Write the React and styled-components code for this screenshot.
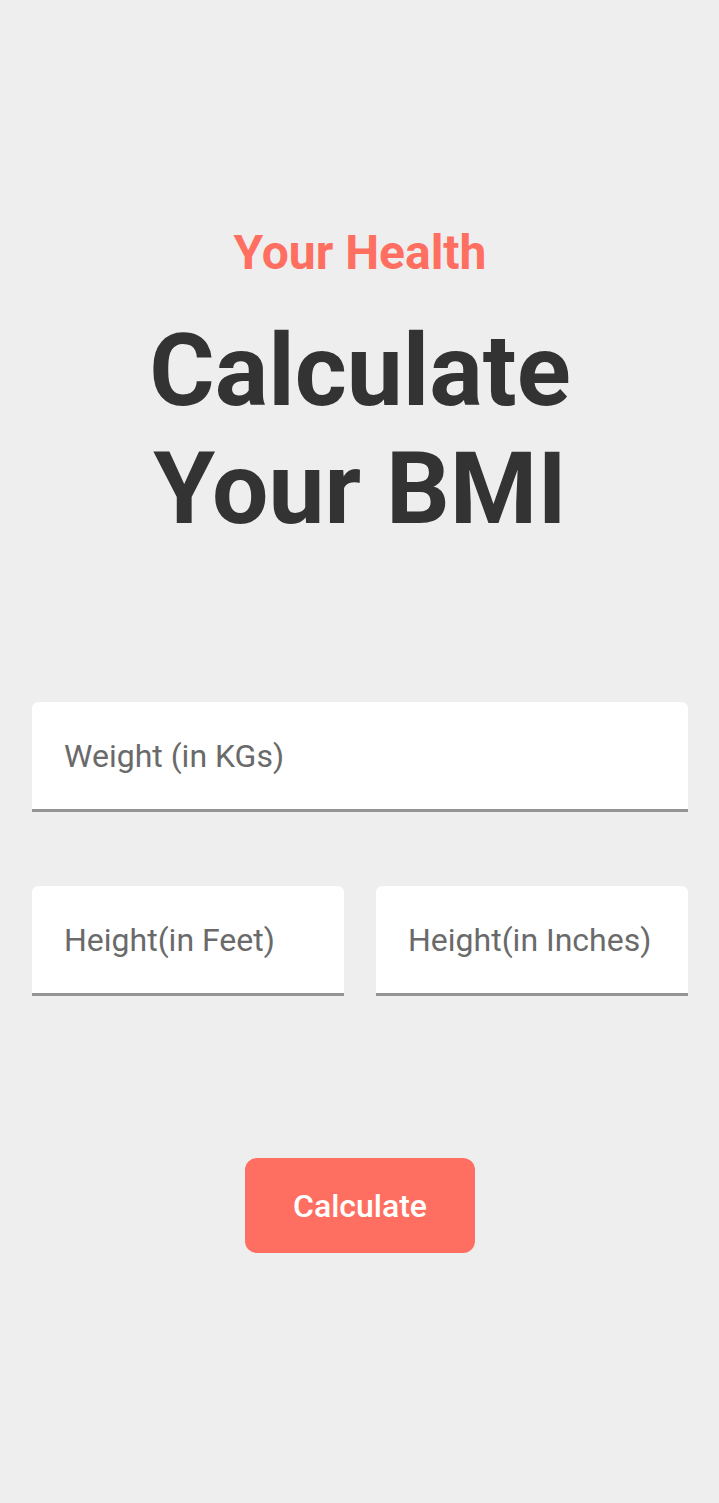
import React from 'react';
import styled, { createGlobalStyle } from 'styled-components';

const GlobalStyle = createGlobalStyle`
  html, body {
    margin: 0;
    padding: 0;
    background: #eeeeee;
    font-family: Roboto, "Noto Sans", sans-serif;
  }
`;

const Page = styled.div`
  min-height: 1503px;
  box-sizing: border-box;
  padding: 223px 31px 0 32px;
  display: flex;
  flex-direction: column;
  align-items: center;
`;

const Kicker = styled.h2`
  margin: 0;
  font-size: 48px;
  font-weight: 700;
  line-height: 60px;
  color: #ff6f61;
`;

const Title = styled.h1`
  margin: 29px 0 0;
  font-size: 100px;
  font-weight: 700;
  line-height: 118px;
  color: #333333;
  text-align: center;
`;

const Form = styled.form`
  width: 100%;
  margin-top: 154px;
  display: flex;
  flex-direction: column;
  gap: 74px;
`;

const Row = styled.div`
  display: grid;
  grid-template-columns: ${(p) => (p.$cols === 2 ? '1fr 1fr' : '1fr')};
  gap: 32px;
`;

const Field = styled.input`
  box-sizing: border-box;
  width: 100%;
  min-width: 0;
  height: 110px;
  padding: 0 12px 0 32px;
  border: none;
  border-bottom: 3px solid #949494;
  border-radius: 6px 6px 0 0;
  background: #ffffff;
  font-family: Roboto, "Noto Sans", sans-serif;
  font-size: 32px;
  color: #333;
  outline: none;

  &::placeholder {
    color: #6a6a6a;
  }
`;

const Button = styled.button`
  margin-top: 162px;
  width: 230px;
  height: 95px;
  border: none;
  border-radius: 12px;
  background: #ff6f61;
  color: #ffffff;
  font-family: Roboto, "Noto Sans", sans-serif;
  font-size: 32px;
  font-weight: 500;
  cursor: pointer;
`;

const App = () => (
  <>
    <GlobalStyle />
    <Page>
      <Kicker>Your Health</Kicker>
      <Title>
        Calculate
        <br />
        Your BMI
      </Title>
      <Form onSubmit={(e) => e.preventDefault()}>
        <Row>
          <Field type="text" inputMode="decimal" placeholder="Weight (in KGs)" />
        </Row>
        <Row $cols={2}>
          <Field type="text" inputMode="decimal" placeholder="Height(in Feet)" />
          <Field type="text" inputMode="decimal" placeholder="Height(in Inches)" />
        </Row>
      </Form>
      <Button type="button">Calculate</Button>
    </Page>
  </>
);

export default App;
